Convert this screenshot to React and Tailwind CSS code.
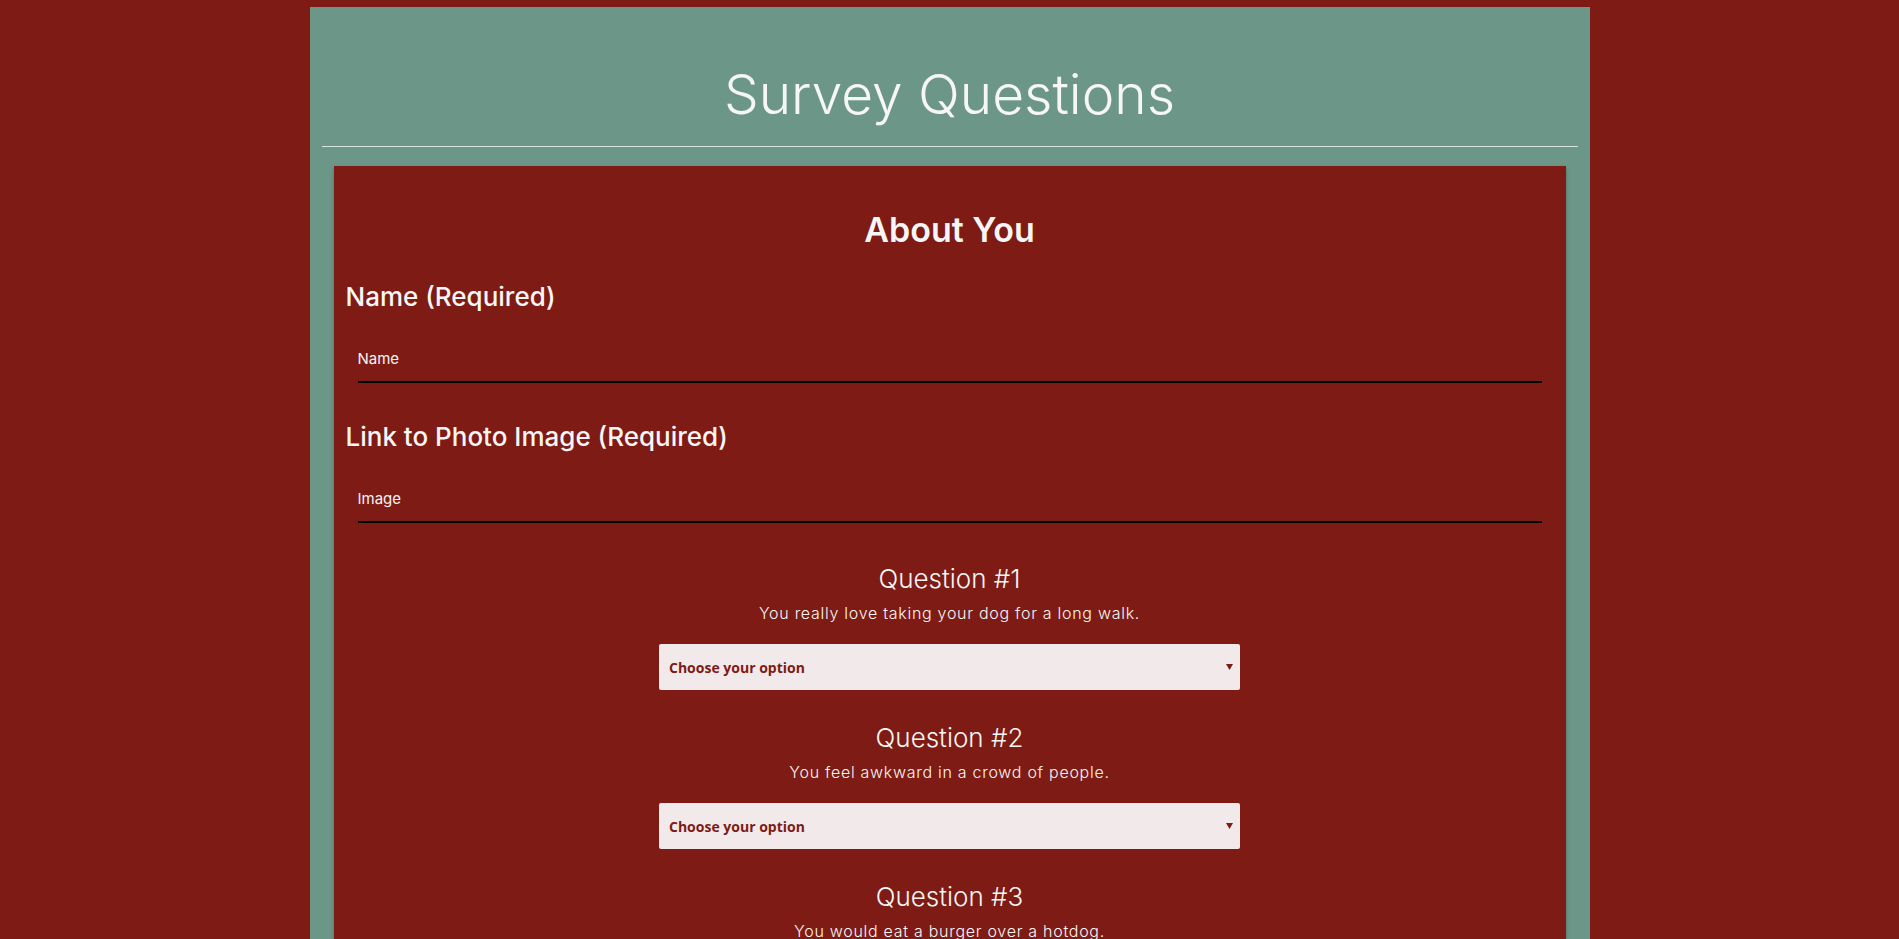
import React from 'react';

const questions = [
  { title: 'Question #1', text: 'You really love taking your dog for a long walk.' },
  { title: 'Question #2', text: 'You feel awkward in a crowd of people.' },
  { title: 'Question #3', text: 'You would eat a burger over a hotdog.' },
  { title: 'Question #4', text: 'You would rather spend a weekend at home than go out.' },
  { title: 'Question #5', text: 'You enjoy trying new and exotic foods.' },
];

function TextField({ label }) {
  return (
    <div className="mx-3 mt-[36px] border-b-2 border-black pb-[12px]">
      <span className="block text-[15px] leading-[20px] font-normal text-[#f4f4f4]">{label}</span>
    </div>
  );
}

function SelectBox() {
  return (
    <div className="mx-auto mt-[19px] flex h-[46px] w-[581px] items-center justify-between rounded-[2px] bg-[#f2eaea] pl-[10px] pr-[7px]">
      <span className="font-['Open_Sans',sans-serif] text-[14px] font-bold text-[#7e1b14]">
        Choose your option
      </span>
      <svg width="7" height="6" viewBox="0 0 7 6" className="text-[#7e1b14]">
        <path d="M0 0 L7 0 L3.5 6 Z" fill="currentColor" />
      </svg>
    </div>
  );
}

function Question({ title, text, first }) {
  return (
    <div className={first ? 'mt-[40px] text-center' : 'mt-[32px] text-center'}>
      <h5 className="text-[26px] leading-[32px] font-light text-[#f6f6f6]">{title}</h5>
      <p className="mt-[6px] text-[16px] leading-[24px] font-light tracking-[0.045em] text-[#f6f6f6]">{text}</p>
      <SelectBox />
    </div>
  );
}

export default function App() {
  return (
    <div className="min-h-screen bg-[#7e1b14] pt-[7px] font-['Inter',sans-serif]">
      <div className="mx-auto w-[1280px] bg-[#6c9788] px-3 pt-[57px] pb-10">
        {/* Header */}
        <h1 className="text-center text-[55px] leading-[60px] font-light text-[#f6f6f6]">
          Survey Questions
        </h1>
        <hr className="mt-[22px] border-0 border-t border-[#d9e3df]" />

        {/* Form card */}
        <div className="mx-3 mt-[19px] bg-[#7e1b14] px-3 pt-[44px] pb-12 shadow-[0_2px_4px_rgba(0,0,0,0.25)]">
          <h4 className="text-center text-[34px] leading-[40px] font-semibold text-[#f6f6f6]">About You</h4>

          <h5 className="mt-[31px] text-[26px] leading-[32px] font-medium text-[#f6f6f6]">Name (Required)</h5>
          <TextField label="Name" />

          <h5 className="mt-[38px] text-[26px] leading-[32px] font-medium text-[#f6f6f6]">
            Link to Photo Image (Required)
          </h5>
          <TextField label="Image" />

          {questions.map((q, i) => (
            <Question key={q.title} title={q.title} text={q.text} first={i === 0} />
          ))}
        </div>
      </div>
    </div>
  );
}
